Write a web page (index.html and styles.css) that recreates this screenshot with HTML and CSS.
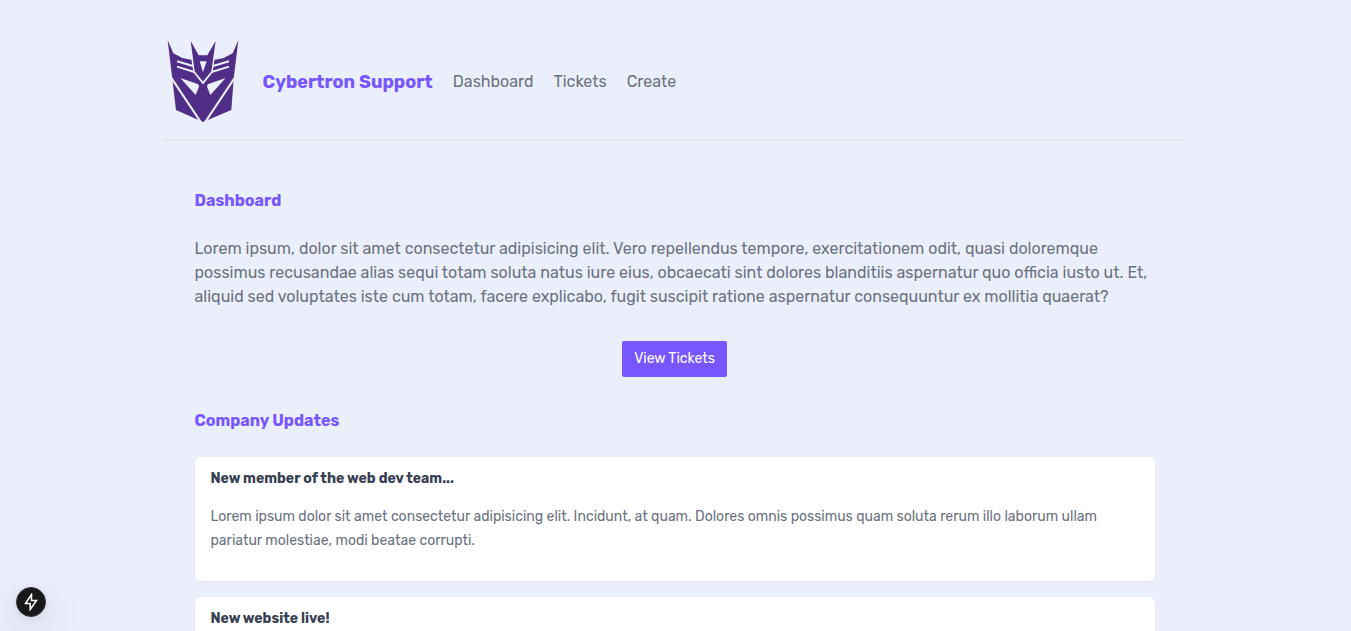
FILE: index.html
```html
<!DOCTYPE html>
<html lang="en">
<head>
<meta charset="utf-8">
<meta name="viewport" content="width=device-width, initial-scale=1">
<title>Cybertron Support</title>
<link rel="stylesheet" href="styles.css">
</head>
<body>
<nav class="nav">
  <svg class="logo" viewBox="36 33 216 246" role="img" aria-label="Cybertron logo">
    <path class="mark" d="M38 31 L55 70 L82 84 L112 90 H176 L206 84 L233 70 L250 31 L236 146 L229 240 L144 276 L63 240 L52 146 Z"/>
    <path class="line" d="M66 94 L114 108 M66 110 L118 126 M222 94 L174 108 M222 110 L170 126"/>
    <path class="line" d="M111 80 L118 126 L144 159 L170 126 L177 80"/>
    <path class="mark" d="M107 33 L131 76 H157 L182 33 L169 124 L144 153 L119 124 Z"/>
    <path class="gap" d="M134 94 H155 L144 127 Z M76 144 L130 163 L132 170 L122 195 Z M212 144 L158 163 L156 170 L166 195 Z"/>
    <path class="line" d="M48 142 L140 280 M240 142 L148 280"/>
  </svg>
  <h1 class="brand">Cybertron Support</h1>
  <a class="link" href="#dashboard">Dashboard</a>
  <a class="link" href="#tickets">Tickets</a>
  <a class="link" href="#create">Create</a>
</nav>
<main class="main" id="dashboard">
  <h2 class="heading">Dashboard</h2>
  <p class="intro">Lorem ipsum, dolor sit amet consectetur adipisicing elit. Vero repellendus tempore, exercitationem odit, quasi doloremque possimus recusandae alias sequi totam soluta natus iure eius, obcaecati sint dolores blanditiis aspernatur quo officia iusto ut. Et, aliquid sed voluptates iste cum totam, facere explicabo, fugit suscipit ratione aspernatur consequuntur ex mollitia quaerat?</p>
  <div class="actions"><button class="button" type="button">View Tickets</button></div>
  <h2 class="heading">Company Updates</h2>
  <article class="card">
    <h3 class="card-title">New member of the web dev team...</h3>
    <p class="card-text">Lorem ipsum dolor sit amet consectetur adipisicing elit. Incidunt, at quam. Dolores omnis possimus quam soluta rerum illo laborum ullam pariatur molestiae, modi beatae corrupti.</p>
  </article>
  <article class="card">
    <h3 class="card-title">New website live!</h3>
  </article>
</main>
<button class="indicator" type="button" aria-label="Developer tools">
  <svg class="bolt" viewBox="0 0 16 18" aria-hidden="true"><path d="M8.5 1.5 L2.5 10.5 H7.2 V16.5 L13.5 7.5 H8.5 Z"/></svg>
</button>
</body>
</html>
```
FILE: styles.css
```css
* { box-sizing: border-box; }
html { scrollbar-width: none; }
body {
  margin: 0;
  padding-right: 2px;
  background: #ebeffb;
  color: #6b7280;
  font: 16px/24px Rubik, Inter, "Open Sans", sans-serif;
}
h1, h2, h3, p { margin: 0; }
.nav, .main { max-width: 1024px; margin: 0 auto; }
.nav {
  display: flex;
  align-items: center;
  gap: 20px;
  padding: 41px 4px 16px;
  border-bottom: 2px solid #e5e7eb;
}
.logo { width: 72px; height: 82px; margin-right: 4px; flex: none; overflow: visible; }
.mark { fill: #502d87; }
.gap { fill: #ebeffb; }
.line { fill: none; stroke: #ebeffb; stroke-width: 6; }
.brand { color: #7856ff; font-size: 18px; line-height: 28px; font-weight: 700; }
.link { color: inherit; text-decoration: none; }
.main { padding: 48px 32px; }
.heading { color: #7856ff; font-size: 16px; line-height: 24px; font-weight: 700; margin-bottom: 24px; }
.actions { display: flex; justify-content: center; margin: 32px 0; }
.button {
  padding: 8px 12px;
  border: 0;
  border-radius: 2px;
  background: #7856ff;
  color: #fff;
  font: 400 14px/20px Rubik, Inter, "Open Sans", sans-serif;
}
.card {
  margin-bottom: 16px;
  padding: 12px 16px 28px;
  border-radius: 6px;
  background: #fff;
  box-shadow: 0 1px 2px rgb(0 0 0 / 5%);
}
.card-title { color: #374151; font-size: 14px; line-height: 20px; font-weight: 700; margin-bottom: 16px; }
.card-text { font-size: 14px; line-height: 24px; }
.indicator {
  position: fixed;
  left: 16px;
  bottom: 14px;
  display: grid;
  place-items: center;
  width: 30px;
  height: 30px;
  padding: 0;
  border: 1px solid #343438;
  border-radius: 50%;
  background: #18181b;
  box-shadow: 0 11px 40px rgb(0 0 0 / 15%), 0 2px 10px rgb(0 0 0 / 8%);
}
.bolt { width: 16px; height: 18px; fill: none; stroke: #fff; stroke-width: 1.5; }
```
